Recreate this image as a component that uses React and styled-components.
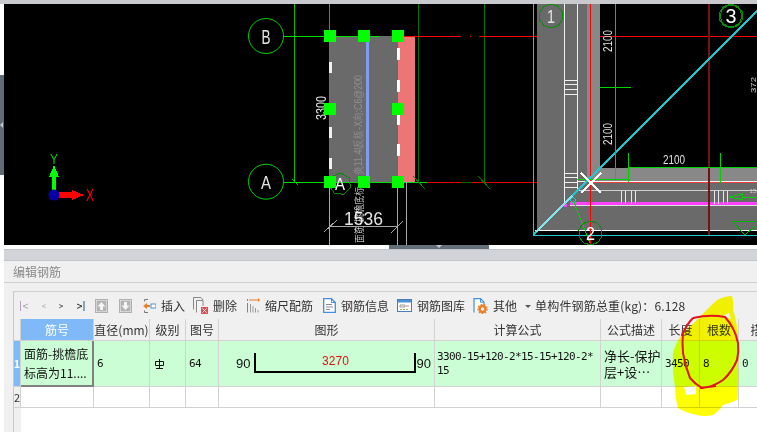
import React from 'react';
import styled, { createGlobalStyle } from 'styled-components';

const Global = createGlobalStyle`
  html, body { margin: 0; padding: 0; background: #fff; }
  body { font-family: "Noto Sans CJK SC", "Liberation Sans", sans-serif; }
  *, *::before, *::after { box-sizing: border-box; }
`;
const Page = styled.div`
  position: relative; width: 757px; height: 432px; overflow: hidden;
  display: flex; flex-direction: column; background: #fff; color: #333;
`;
const TopStrip = styled.div`height: 4px; flex: none; background: #c9cace;`;
const Viewport = styled.div`display: flex; height: 241px; flex: none;`;
const Rail = styled.div`
  width: 4px; flex: none; background: #fff; display: flex; flex-direction: column; padding-top: 71px;
`;
const RailGrip = styled.div`
  height: 100px; background: #5f6b76; display: flex; align-items: center;
  &::before { content: ""; border: 3px solid transparent; border-left: 0; border-right: 3px solid #c4c8cc; }
`;
const Canvas = styled.svg`
  display: block; width: 753px; height: 241px; background: #000;
  line, polygon, polyline, rect { shape-rendering: crispEdges; }
`;
const Splitter = styled.div`
  height: 4px; flex: none; background: #fff; display: flex; padding-left: 389px;
`;
const SplitGrip = styled.div`
  width: 100px; background: #646f79; display: flex; justify-content: center;
  &::before { content: ""; border: 3px solid transparent; border-bottom: 0; border-top: 3px solid #c4c8cc; }
`;
const Panel = styled.div`
  flex: 1; min-height: 0; margin-left: 4px; display: flex; flex-direction: column; background: #f0f0f0;
`;
const PanelCap = styled.div`height: 12px; flex: none; background: #d3d4d9; border-top: 1px solid #c4c5ca; border-bottom: 1px solid #c4c5ca;`;
const Title = styled.div`
  height: 22px; flex: none; display: flex; align-items: center; padding-left: 9px;
  font-size: 12px; color: #8a8a8a; border-bottom: 1px solid #cfcfcf; background: #f0f0f0;
`;
const Body = styled.div`flex: 1; min-height: 0; display: flex; flex-direction: column; padding: 8px 0 0 9px;`;
const Box = styled.div`
  flex: 1; min-height: 0; display: flex; flex-direction: column; width: 800px;
  border-left: 1px solid #c8c8c8; border-top: 1px solid #d0d0d0; background: #f0f0f0;
`;
const Toolbar = styled.div`
  height: 27px; flex: none; display: flex; align-items: center; padding-left: 6px; font-size: 12px; white-space: nowrap;
`;
const Nav = styled.span`
  width: ${p => p.$w}px; margin-right: ${p => p.$m}px; flex: none; display: flex; justify-content: center;
`;
const Tool = styled.span`
  display: flex; align-items: center; gap: 5px; flex: none; margin-left: ${p => p.$m || 0}px;
`;
const Caret = styled.span`
  width: 6px; height: 0; margin: 1px 4px 0 8px; border: 3px solid transparent; border-top: 3px solid #555; border-bottom: 0; flex: none;
`;
const Total = styled.span`letter-spacing: 0.17px;`;
const Table = styled.div`
  display: grid; flex: none;
  grid-template-columns: 7px 73px 56px 36px 33px 216px 166px 61px 38px 39px 36px;
  grid-template-rows: 22px 46px 21px;
`;
const Head = styled.div`
  display: flex; align-items: center; justify-content: center; font-size: 12px; white-space: nowrap; overflow: hidden;
  background: ${p => (p.$active ? '#7fb9f8' : '#f0f0f0')}; color: ${p => (p.$active ? '#fff' : '#333')};
  border-right: 1px solid #d2d2d2; border-bottom: 1px solid #d2d2d2;
`;
const RowHead = styled.div`
  display: flex; align-items: center; justify-content: center; font-size: 11px; line-height: 1; overflow: hidden;
  background: ${p => (p.$active ? '#7fb9f8' : '#f0f0f0')}; color: ${p => (p.$active ? '#fff' : '#333')};
  font-weight: ${p => (p.$active ? 700 : 400)};
  border-right: 1px solid #d2d2d2; border-bottom: 1px solid #d2d2d2;
`;
const Cell = styled.div`
  display: flex; align-items: center; overflow: hidden; padding: 0 3px; min-width: 0;
  background: ${p => (p.$empty ? '#fff' : '#ccfed6')};
  border-right: 1px solid #d2d2d2; border-bottom: 1px solid #d2d2d2;
  font-family: "DejaVu Sans Mono", monospace; font-size: 11px; letter-spacing: -0.62px; color: #111;
`;
const NameCell = styled(Cell)`
  font-family: "Noto Sans CJK SC", sans-serif; font-size: 12px; letter-spacing: 0; line-height: 19px; padding: 0 0 0 3px;
  border-right: 2px solid #808080; border-bottom: 2px solid #808080;
  white-space: pre;
`;
const DescCell = styled(Cell)`
  font-family: "Noto Sans CJK SC", sans-serif; font-size: 13px; letter-spacing: 0; line-height: 16px; white-space: pre;
`;
const FormulaCell = styled(Cell)`padding: 0 2px; line-height: 14px; white-space: pre;`;
const ShapeCell = styled(Cell)`
  padding: 0 0 0 17px; font-family: "Liberation Sans", sans-serif; font-size: 13px; letter-spacing: 0; gap: 4px; white-space: nowrap;
`;
const ShapeBar = styled.div`
  width: 162px; height: 20px; margin-top: -2px; flex: none;
  border-left: 2px solid #000; border-right: 2px solid #000; border-bottom: 2px solid #000;
  display: flex; justify-content: center; align-items: flex-start;
  color: #e01010; font-size: 12px; line-height: 16px;
`;
const ShapeEnd = styled.span`margin-left: -4px;`;
const GradeMark = styled.svg`margin-left: 2px; flex: none;`;
const Filler = styled.div`flex: 1; min-height: 0; display: flex; background: #fff;`;
const FillerHead = styled.div`width: 7px; background: #f0f0f0;`;
const Ink = styled.svg`
  position: absolute; left: 0; top: 0; width: 757px; height: 432px; pointer-events: none;
`;
const Highlighter = styled.path`fill: #ffff00; fill-rule: evenodd; mix-blend-mode: multiply;`;
const Pen = styled.path`fill: none; stroke: #e3131f; stroke-width: 2; stroke-linejoin: round;`;

const G = '#00ff00', DG = '#0a8a0a', R = '#ff0000', C = '#22c6d0', W = '#e4e4e4';
const cad = { fontFamily: '"Liberation Sans", sans-serif', fontWeight: 300 };

const Poly = ({ cx, cy, r, n = 10, off = 0.3 }) => {
  const pts = Array.from({ length: n }, (_, i) => {
    const a = (i * 2 * Math.PI) / n + off;
    return `${(cx + r * Math.cos(a)).toFixed(1)},${(cy + r * Math.sin(a)).toFixed(1)}`;
  }).join(' ');
  return <polygon points={pts} fill="none" stroke={DG} strokeWidth="1" />;
};
const Label = ({ x, y, size = 13, fill = W, rot, children, anchor = 'middle', family, w }) => (
  <text x={x} y={y} fontSize={size} fill={fill} textAnchor={anchor}
    textLength={w} lengthAdjust={w ? 'spacingAndGlyphs' : undefined}
    style={{ ...cad, fontFamily: family || cad.fontFamily }}
    transform={rot ? `rotate(${rot} ${x} ${y})` : undefined}>{children}</text>
);
const Handle = ({ cx, cy }) => <rect x={cx - 6} y={cy - 6} width="12" height="12" fill={G} />;
const L = ({ a, b, c, d, s, w = 1 }) => <line x1={a} y1={b} x2={c} y2={d} stroke={s} strokeWidth={w} />;

const Drawing = () => (
  <Canvas viewBox="4 4 753 241">
    {/* axis triad */}
    <rect x="52" y="176" width="4" height="18" fill={G} />
    <polygon points="54,165 59,177 49,177" fill={G} />
    <rect x="56" y="192" width="17" height="6" fill={R} />
    <polygon points="84,195 72,190 72,200" fill={R} />
    <circle cx="54" cy="195" r="5.5" fill="#0000a8" />
    <Label x={54} y={164} size={15} fill="#00d000" w={8}>Y</Label>
    <Label x={90} y={201} size={16} fill={R} w={8}>X</Label>

    {/* left slab */}
    <rect x="329" y="36" width="69" height="146" fill="#6a6a6a" />
    <rect x="398" y="36" width="17" height="146" fill="#ec7676" />
    <rect x="366" y="36" width="3" height="146" fill="#7e9cf0" />
    <L a={294.5} b={4} c={294.5} d={182} s="#00c000" />
    <L a={329.5} b={4} c={329.5} d={182} s="#00c000" />
    <L a={418.5} b={4} c={418.5} d={182} s="#007000" />
    <L a={484.5} b={4} c={484.5} d={182} s="#007000" />
    <L a={284} b={36.5} c={380} d={36.5} s="#00e000" />
    <L a={403} b={36.5} c={461} d={36.5} s={R} />
    <L a={470} b={36.5} c={471} d={36.5} s={R} />
    <L a={479} b={36.5} c={757} d={36.5} s={R} />
    <L a={279} b={182.5} c={427} d={182.5} s="#00e000" />
    <L a={427} b={182.5} c={590} d={182.5} s="#e00000" />
    <L a={461} b={182.5} c={471} d={182.5} s="#006000" />
    <L a={292} b={179} c={298} d={185} s="#00c000" />
    <L a={413} b={176} c={425} d={189} s="#008000" />
    <L a={478} b={176} c={490} d={189} s="#008000" />
    {[48, 80, 113, 144].map(y => <rect key={y} x="397" y={y} width="3" height="12" fill="#fff" />)}
    {[62, 127, 158].map(y => <rect key={y} x="329" y={y} width="3" height="11" fill="#f0f0f0" />)}
    <Label x={362} y={125} size={11} fill="#909090" rot={-90} w={100}>炎11.4l反板-X向:C6@200</Label>
    <Label x={363.5} y={225} size={18} w={39}>1536</Label>
    <Label x={363} y={215} size={10} fill="#fff" rot={-90} family={'"Noto Sans CJK SC", sans-serif'} w={56}>面筋-挑檐底标</Label>
    <Label x={326} y={108} size={14} rot={-90} w={24}>3300</Label>
    <circle cx="266" cy="36" r="17.5" fill="#000" stroke="#00d000" />
    <circle cx="266" cy="181.7" r="17.5" fill="#000" stroke="#00d000" />
    <Label x={266} y={44} size={21} w={9}>B</Label>
    <Label x={266} y={189} size={18} w={10}>A</Label>
    <Poly cx={340} cy={184} r={11} n={7} />
    <Label x={340} y={190} size={17} fill="#fff" w={10}>A</Label>
    <L a={329.5} b={182} c={329.5} d={245} s="#a8a8a8" />
    <L a={397.5} b={182} c={397.5} d={245} s="#a8a8a8" />
    <L a={406.5} b={182} c={406.5} d={245} s="#a8a8a8" />
    <L a={329} b={226.5} c={397} d={226.5} s="#a8a8a8" />
    <L a={324} b={232} c={337} d={220} s="#a8a8a8" />
    <L a={391} b={233} c={403} d={221} s="#a8a8a8" />
    {[[330, 36], [364, 36], [398, 36], [330, 109], [398, 109], [330, 182], [364, 182], [398, 182]].map(([x, y]) => (
      <Handle key={`${x}-${y}`} cx={x} cy={y} />
    ))}

    {/* right L-shaped beam */}
    <polygon points="537,4 587,4 587,168 757,168 757,231 537,231" fill="#6a6a6a" />
    <rect x="587" y="4" width="13" height="164" fill="#888" />
    <rect x="587" y="168" width="170" height="13" fill="#888" />
    <L a={533.5} b={4} c={533.5} d={235} s={C} />
    <L a={535} b={230.5} c={757} d={230.5} s="#fff" w={1.5} />
    <L a={533} b={235.5} c={757} d={235.5} s={C} />
    <L a={564.5} b={4} c={564.5} d={204} s="#f0f0f0" />
    <L a={577.5} b={4} c={577.5} d={190} s="#f0f0f0" />
    {[80, 84, 89, 94, 173, 177, 182, 187].map(y => <L key={y} a={564} b={y + 0.5} c={577} d={y + 0.5} s="#f0f0f0" />)}
    <L a={577} b={181.5} c={757} d={181.5} s="#f4f4f4" w={1.5} />
    <L a={577} b={190.5} c={757} d={190.5} s="#d0d0d0" />
    <rect x="570" y="202" width="187" height="3" fill="#ff40ff" />
    <L a={570} b={205.5} c={757} d={205.5} s="#e0e0e0" />
    <rect x="564" y="204" width="3" height="3" fill="#ff40ff" />
    {[621, 625, 631, 635, 714, 718, 723, 727].map(x => <L key={x} a={x + 0.5} b={191} c={x + 0.5} d={204} s="#e8e8e8" />)}
    <L a={590.5} b={4} c={590.5} d={245} s={R} />
    <L a={590} b={182.5} c={757} d={182.5} s="#e84040" />
    <L a={709} b={4} c={709} d={235} s="#701414" w={2} />
    <L a={533} b={235} c={757} d={11} s={C} w={1.7} />
    <L a={536} b={232} c={572} d={196} s="#7fe8ee" w={2} />
    <L a={615.5} b={4} c={615.5} d={181} s="#00d000" />
    <L a={600} b={87.5} c={631} d={87.5} s="#00d000" />
    <L a={577} b={179.5} c={630} d={179.5} s="#00d000" />
    <L a={628.5} b={153} c={628.5} d={182} s="#00d000" />
    <L a={720.5} b={153} c={720.5} d={183} s="#00d000" />
    <L a={628} b={167.5} c={757} d={167.5} s="#00d000" />
    <polygon points="729,197 742,194 742,199.5" fill="none" stroke="#00d000" />
    <L a={742} b={197} c={757} d={197} s="#00d000" />
    <polyline points="732,221 745,235 757,224" fill="none" stroke="#00b000" />
    <L a={732} b={221} c={757} d={221} s="#00b000" />
    <L a={573} b={200} c={590} d={243} s="#00d000" />
    <rect x="571" y="198" width="4" height="4" fill="none" stroke={C} transform="rotate(45 573 200)" />
    <L a={581} b={173} c={601} d={193} s="#fff" w={2.5} />
    <L a={601} b={173} c={581} d={193} s="#fff" w={2.5} />
    <Poly cx={551} cy={16} r={12} />
    <Poly cx={731} cy={16} r={12} />
    <Poly cx={731} cy={16} r={11} off={0} />
    <Poly cx={590.5} cy={233} r={12} />
    <Label x={551} y={23} size={19} w={8}>1</Label>
    <Label x={731} y={23} size={20} fill="#fff" w={11}>3</Label>
    <Label x={590.5} y={240} size={19} fill="#fff" w={9}>2</Label>
    <Label x={612} y={41} size={13} rot={-90} w={22}>2100</Label>
    <Label x={612} y={134} size={13} rot={-90} w={22}>2100</Label>
    <Label x={674} y={164} size={13} w={22}>2100</Label>
    <Label x={756} y={85} size={7} fill="#ccc" rot={-90} w={16}>372</Label>
    <Label x={753} y={193} size={6} fill="#ccc" w={7}>15</Label>
  </Canvas>
);

const NavGlyph = ({ bar, dir, fill }) => (
  <svg width="11" height="10" viewBox="0 0 11 10">
    {bar === 'l' && <line x1="0.5" y1="0" x2="0.5" y2="10" stroke="#b9a0c0" />}
    {bar === 'r' && <line x1="10" y1="0" x2="10" y2="10" stroke="#1a5a80" />}
    <polyline points={dir === 'l' ? '8,3 3,5.2 8,7.4' : '3,3 8,5.2 3,7.4'} fill="none" stroke={fill} />
  </svg>
);
const MoveIcon = ({ down, m }) => (
  <Tool $m={m}>
    <svg width="13" height="14" viewBox="0 0 13 14">
      <rect x="0.5" y="0.5" width="12" height="13" fill="#f4f4f4" stroke="#b0b0b0" />
      <rect x="1.5" y="1.5" width="10" height="11" fill="#b4b4b4" />
      <path d={down ? 'M6.5 11 L2.5 6.5 H5 V3 H8 V6.5 H10.5 Z' : 'M6.5 3 L2.5 7.5 H5 V11 H8 V7.5 H10.5 Z'} fill="#f6f6f6" />
    </svg>
  </Tool>
);
const InsertIcon = () => (
  <svg width="13" height="16" viewBox="0 0 13 16">
    <path d="M5 1.5 H1.5 V3.5 M5 14.5 H1.5 V12.5" fill="none" stroke="#777" />
    <path d="M0 8 L4 5 V7 H7 V9 H4 V11 Z" fill="#ef7d22" />
    <rect x="8" y="6" width="5" height="4" fill="#fff" stroke="#4a90d9" />
  </svg>
);
const DeleteIcon = () => (
  <svg width="15" height="17" viewBox="0 0 15 17">
    <path d="M0.5 12.5 V0.5 H8 L10 3" fill="none" stroke="#888" />
    <path d="M3.5 15.5 V3.5 H10 V9" fill="#f4f4f4" stroke="#888" />
    <rect x="8" y="10" width="7" height="7" fill="#e05050" />
    <path d="M9.5 11.5 L13.5 15.5 M13.5 11.5 L9.5 15.5" stroke="#fff" />
  </svg>
);
const ScaleIcon = () => (
  <svg width="13" height="15" viewBox="0 0 13 15">
    <path d="M2 2 H11" stroke="#ef7d22" />
    <path d="M11 0 L13 2 L11 4 Z" fill="#ef7d22" />
    <path d="M0.5 1 V3 M0.5 5 V14.5" stroke="#4a90d9" />
    <path d="M3.5 6 V14.5 M6 8 V14.5 M8.5 10 V14.5 M11 12 V14.5" stroke="#999" />
  </svg>
);
const InfoIcon = () => (
  <svg width="13" height="15" viewBox="0 0 13 15">
    <path d="M0.7 0.7 H8.5 L12.3 4.5 V14.3 H0.7 Z" fill="#fff" stroke="#3f8fdc" strokeWidth="1.3" />
    <path d="M8.5 0.7 V4.5 H12.3" fill="none" stroke="#3f8fdc" />
    <path d="M3 6.5 H9 M3 9 H10 M3 11.5 H7" stroke="#8a8a8a" />
  </svg>
);
const LibIcon = () => (
  <svg width="15" height="13" viewBox="0 0 15 13">
    <rect x="0.5" y="0.5" width="14" height="12" fill="#fff" stroke="#4a7fb5" />
    <rect x="1" y="1" width="13" height="2.5" fill="#4a90d9" />
    <path d="M3 6 H8 V8 H3 Z" fill="none" stroke="#999" />
    <path d="M3 10.5 H12" stroke="#9ab85a" strokeDasharray="2 1" />
    <path d="M9 7 H12" stroke="#c88" />
  </svg>
);
const OtherIcon = () => (
  <svg width="15" height="16" viewBox="0 0 15 16">
    <path d="M1 14.5 V0.7 H7.5 L11 4.2 V7" fill="#fff" stroke="#3f8fdc" strokeWidth="1.2" />
    <path d="M7.5 0.7 V4.2 H11" fill="none" stroke="#3f8fdc" />
    <circle cx="9.5" cy="11" r="3" fill="none" stroke="#ef7d22" strokeWidth="2.4" />
    <circle cx="9.5" cy="11" r="4.6" fill="none" stroke="#ef7d22" strokeWidth="1.2" strokeDasharray="1.6 1.6" />
  </svg>
);
const Grade = () => (
  <GradeMark width="9" height="10" viewBox="0 0 9 10">
    <path d="M0.5 2.5 H8.5 V6.5 H0.5 Z M4.5 0 V9.5 M1 9.5 H8" fill="none" stroke="#111" />
  </GradeMark>
);

const columns = ['直径(mm)', '级别', '图号', '图形', '计算公式', '公式描述', '长度', '根数', '搭'];

export default function App() {
  return (
    <Page>
      <Global />
      <TopStrip />
      <Viewport>
        <Rail><RailGrip /></Rail>
        <Drawing />
      </Viewport>
      <Splitter><SplitGrip /></Splitter>
      <Panel>
        <PanelCap />
        <Title>编辑钢筋</Title>
        <Body>
          <Box>
            <Toolbar>
              <Nav $w={11} $m={9}><NavGlyph bar="l" dir="l" fill="#aaa" /></Nav>
              <Nav $w={8} $m={9}><NavGlyph dir="l" fill="#aaa" /></Nav>
              <Nav $w={8} $m={9}><NavGlyph dir="r" fill="#333" /></Nav>
              <Nav $w={11} $m={10}><NavGlyph bar="r" dir="r" fill="#333" /></Nav>
              <MoveIcon />
              <MoveIcon m={11} down />
              <Tool $m={11}><InsertIcon />插入</Tool>
              <Tool $m={8}><DeleteIcon />删除</Tool>
              <Tool $m={10}><ScaleIcon />缩尺配筋</Tool>
              <Tool $m={10}><InfoIcon />钢筋信息</Tool>
              <Tool $m={8}><LibIcon />钢筋图库</Tool>
              <Tool $m={8}><OtherIcon />其他</Tool>
              <Caret />
              <Total>单构件钢筋总重(kg)：6.128</Total>
            </Toolbar>
            <Table>
              <Head />
              <Head $active>筋号</Head>
              {columns.map(c => <Head key={c}>{c}</Head>)}
              <RowHead $active>1</RowHead>
              <NameCell>{'面筋-挑檐底\n标高为11....'}</NameCell>
              <Cell>6</Cell>
              <Cell><Grade /></Cell>
              <Cell>64</Cell>
              <ShapeCell>90<ShapeBar>3270</ShapeBar><ShapeEnd>90</ShapeEnd></ShapeCell>
              <FormulaCell>{'3300-15+120-2*15-15+120-2*\n15'}</FormulaCell>
              <DescCell>{'净长-保护\n层+设…'}</DescCell>
              <Cell>3450</Cell>
              <Cell>8</Cell>
              <Cell>0</Cell>
              <RowHead>2</RowHead>
              {Array.from({ length: 10 }, (_, i) => <Cell key={i} $empty />)}
            </Table>
            <Filler><FillerHead /></Filler>
          </Box>
        </Body>
      </Panel>
      <Ink viewBox="0 0 757 432">
        <Highlighter d="M732 296 Q734 303 733 310 Q737 322 738 337 Q739 352 738 367 Q739 385 737 400 Q730 403 723 405 Q718 412 713 415 Q705 417 697 415 Q686 413 678 408 Q675 398 675 387 Q672 370 673 353 Q676 342 683 333 Q692 325 700 317 Q708 308 717 300 Q725 296 732 296 Z M684 387 L696 386 L696 394 L686 395 Z M723 316 L729 313 L731 319 Z" />
        <Pen d="M693 318 Q710 314 725 317 Q735 328 738 343 Q739 352 737 360 Q732 372 723 380 Q713 387 702 388 M700 388 L716 386 M702 388 Q695 384 690 378 Q685 366 683 353 Q682 342 683 333 Q687 324 693 318" />
      </Ink>
    </Page>
  );
}
